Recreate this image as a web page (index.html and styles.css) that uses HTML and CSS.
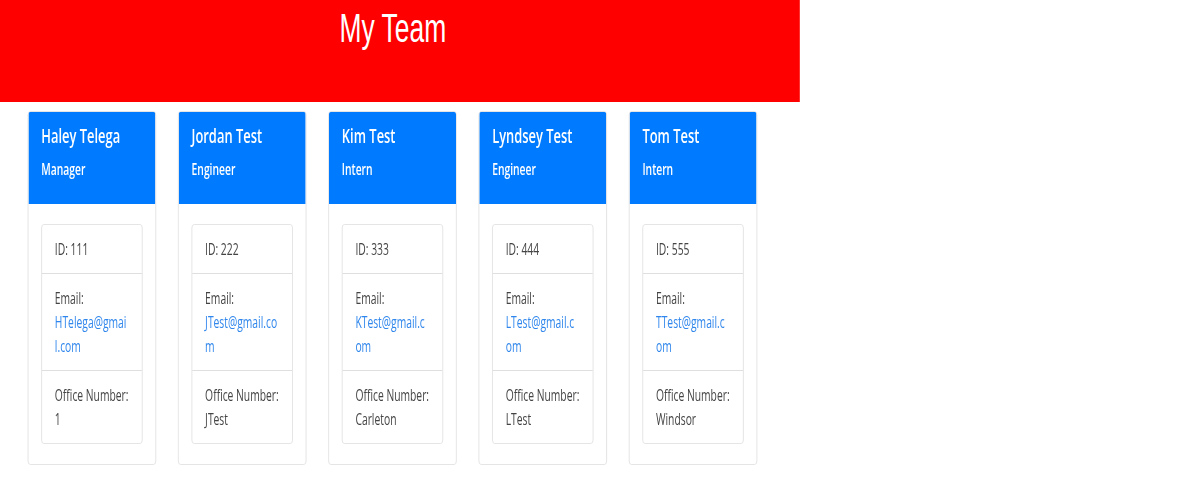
FILE: index.html
```html
<!DOCTYPE html>
<html lang="en">
<head>
<meta charset="utf-8">
<title>My Team</title>
<link rel="stylesheet" href="styles.css">
</head>
<body>
<div class="page">
  <header class="banner">
    <h1 class="banner-title">My Team</h1>
  </header>
  <main class="team">
    <div class="card">
      <div class="card-header">
        <h2 class="name">Haley Telega</h2>
        <h3 class="role">Manager</h3>
      </div>
      <div class="card-body">
        <ul class="list">
          <li class="item">ID: 111</li>
          <li class="item"><div>Email:</div><a class="mail" href="#">HTelega@gmai<wbr>l.com</a></li>
          <li class="item"><div class="label">Office Number:</div><div>1</div></li>
        </ul>
      </div>
    </div>
    <div class="card">
      <div class="card-header">
        <h2 class="name">Jordan Test</h2>
        <h3 class="role">Engineer</h3>
      </div>
      <div class="card-body">
        <ul class="list">
          <li class="item">ID: 222</li>
          <li class="item"><div>Email:</div><a class="mail" href="#">JTest@gmail.co<wbr>m</a></li>
          <li class="item"><div class="label">Office Number:</div><div>JTest</div></li>
        </ul>
      </div>
    </div>
    <div class="card">
      <div class="card-header">
        <h2 class="name">Kim Test</h2>
        <h3 class="role">Intern</h3>
      </div>
      <div class="card-body">
        <ul class="list">
          <li class="item">ID: 333</li>
          <li class="item"><div>Email:</div><a class="mail" href="#">KTest@gmail.c<wbr>om</a></li>
          <li class="item"><div class="label">Office Number:</div><div>Carleton</div></li>
        </ul>
      </div>
    </div>
    <div class="card">
      <div class="card-header">
        <h2 class="name">Lyndsey Test</h2>
        <h3 class="role">Engineer</h3>
      </div>
      <div class="card-body">
        <ul class="list">
          <li class="item">ID: 444</li>
          <li class="item"><div>Email:</div><a class="mail" href="#">LTest@gmail.c<wbr>om</a></li>
          <li class="item"><div class="label">Office Number:</div><div>LTest</div></li>
        </ul>
      </div>
    </div>
    <div class="card">
      <div class="card-header">
        <h2 class="name">Tom Test</h2>
        <h3 class="role">Intern</h3>
      </div>
      <div class="card-body">
        <ul class="list">
          <li class="item">ID: 555</li>
          <li class="item"><div>Email:</div><a class="mail" href="#">TTest@gmail.c<wbr>om</a></li>
          <li class="item"><div class="label">Office Number:</div><div>Windsor</div></li>
        </ul>
      </div>
    </div>
  </main>
</div>
</body>
</html>
```

FILE: styles.css
```css
html, body {
  margin: 0;
  padding: 0;
  background: #ffffff;
}

body {
  font-family: "Open Sans", "Noto Sans", sans-serif;
  font-size: 16px;
  line-height: 24px;
  color: #444444;
  overflow: hidden;
}

.page {
  width: 1240px;
  transform: scaleX(0.645);
  transform-origin: 0 0;
}

.banner {
  background: #ff0000;
  height: 102px;
  box-sizing: border-box;
  padding-top: 4px;
}

.banner-title {
  margin: 0;
  padding-right: 22px;
  font-family: "Liberation Sans", Arial, sans-serif;
  font-weight: 400;
  font-size: 41px;
  line-height: 48px;
  color: #ffffff;
  text-align: center;
}

.team {
  display: flex;
  gap: 34px;
  padding: 9px 0 0 43px;
}

.card {
  box-sizing: border-box;
  width: 199px;
  flex: none;
  border: 1px solid #dfdfdf;
  border-radius: 4px;
  overflow: hidden;
  background: #ffffff;
}

.card-header {
  background: #007bff;
  color: #ffffff;
  padding: 12px 20px 25px;
}

.name {
  margin: 0 0 12px;
  font-size: 20px;
  line-height: 24px;
  font-weight: 600;
  white-space: nowrap;
}

.role {
  margin: 0;
  font-size: 16px;
  line-height: 19px;
  font-weight: 600;
}

.card-body {
  padding: 20px 20px;
}

.list {
  list-style: none;
  margin: 0;
  padding: 0;
  border: 1px solid #dfdfdf;
  border-radius: 4px;
}

.item {
  padding: 12px 20px;
  border-top: 1px solid #dfdfdf;
}

.item:first-child {
  border-top: none;
}

.label {
  white-space: nowrap;
}

.mail {
  color: #2f86ec;
  text-decoration: none;
}
```
